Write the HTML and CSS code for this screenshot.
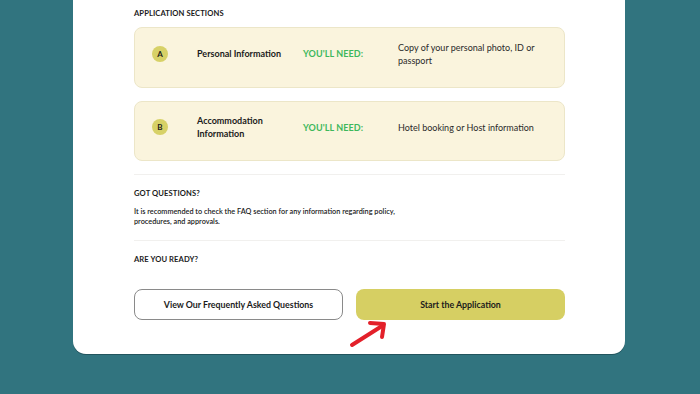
FILE: index.html
```html
<!DOCTYPE html>
<html>
<head>
<meta charset="utf-8">
<link rel="stylesheet" href="styles.css">
</head>
<body>
<div class="panel">
  <h3 class="label">APPLICATION SECTIONS</h3>
  <div class="sections">
    <div class="section">
      <span class="badge">A</span>
      <span class="title">Personal Information</span>
      <span class="need">YOU'LL NEED:</span>
      <span class="desc">Copy of your personal photo, ID or passport</span>
    </div>
    <div class="section">
      <span class="badge">B</span>
      <span class="title">Accommodation Information</span>
      <span class="need">YOU'LL NEED:</span>
      <span class="desc">Hotel booking or Host information</span>
    </div>
  </div>
  <div class="block first">
    <h3 class="label">GOT QUESTIONS?</h3>
    <p class="para">It is recommended to check the FAQ section for any information regarding policy,<br>procedures, and approvals.</p>
  </div>
  <div class="block">
    <h3 class="label">ARE YOU READY?</h3>
  </div>
  <div class="actions">
    <button class="btn btn-outline">View Our Frequently Asked Questions</button>
    <button class="btn btn-primary">Start the Application</button>
    <svg class="arrow" width="44" height="32" viewBox="0 0 44 32">
      <path d="M4 28 L34 9" stroke="#e3202a" stroke-width="4" stroke-linecap="round" fill="none"/>
      <path d="M22 6 L36 7 L34 20" stroke="#e3202a" stroke-width="4" stroke-linecap="round" stroke-linejoin="round" fill="none"/>
    </svg>
  </div>
</div>
</body>
</html>
```
FILE: styles.css
```css
* { box-sizing: border-box; }
html, body { margin: 0; padding: 0; }
body {
  background: #31747f;
  font-family: "Lato", "Inter", sans-serif;
  color: #1b1b1b;
  width: 700px;
  height: 394px;
  overflow: hidden;
}
.panel {
  width: 552px;
  margin-left: 73px;
  background: #ffffff;
  border-radius: 0 0 13px 13px;
  padding: 8px 60px 34px 61px;
  box-shadow: 0 1px 0 #22555e;
}
.label {
  margin: 0;
  font-size: 7.6px;
  font-weight: 700;
  line-height: 10px;
  letter-spacing: 0.1px;
  color: #1b1b1b;
}
.sections {
  margin-top: 9px;
  display: flex;
  flex-direction: column;
  gap: 13px;
  padding-bottom: 13px;
}
.section {
  display: grid;
  grid-template-columns: 45px 106px 95px 1fr;
  align-items: center;
  height: 61px;
  padding-left: 17px;
  padding-bottom: 8px;
  background: #faf4dd;
  border: 1px solid #ece6c8;
  border-radius: 8px;
}
.section + .section { height: 60px; }
.badge {
  width: 16px;
  height: 16px;
  border-radius: 50%;
  background: #d7d167;
  font-size: 8px;
  font-weight: 700;
  display: flex;
  align-items: center;
  justify-content: center;
  color: #1b1b1b;
}
.title {
  font-size: 9px;
  font-weight: 700;
  line-height: 13px;
  padding-right: 20px;
}
.need {
  font-size: 9px;
  font-weight: 700;
  color: #3db85c;
  letter-spacing: 0.1px;
}
.desc {
  font-size: 9px;
  line-height: 13px;
  color: #2a2a2a;
  width: 140px;
}
.block {
  border-top: 1px solid #f1f0ee;
  padding-top: 13px;
}
.block.first { padding-bottom: 13px; }
.para {
  margin: 9px 0 0;
  font-size: 7.3px;
  line-height: 10px;
  font-weight: 600;
  color: #1b1b1b;
}
.actions {
  position: relative;
  margin-top: 25px;
  display: grid;
  grid-template-columns: 1fr 1fr;
  gap: 13px;
}
.btn {
  height: 31px;
  border-radius: 8px;
  font-family: "Lato", sans-serif;
  font-size: 8.8px;
  font-weight: 700;
  color: #1b1b1b;
  cursor: pointer;
}
.btn-outline {
  background: #ffffff;
  border: 1px solid #8a8a8a;
}
.btn-primary {
  background: #d6cf63;
  border: none;
}
.arrow {
  position: absolute;
  left: 214px;
  top: 28px;
}
```
